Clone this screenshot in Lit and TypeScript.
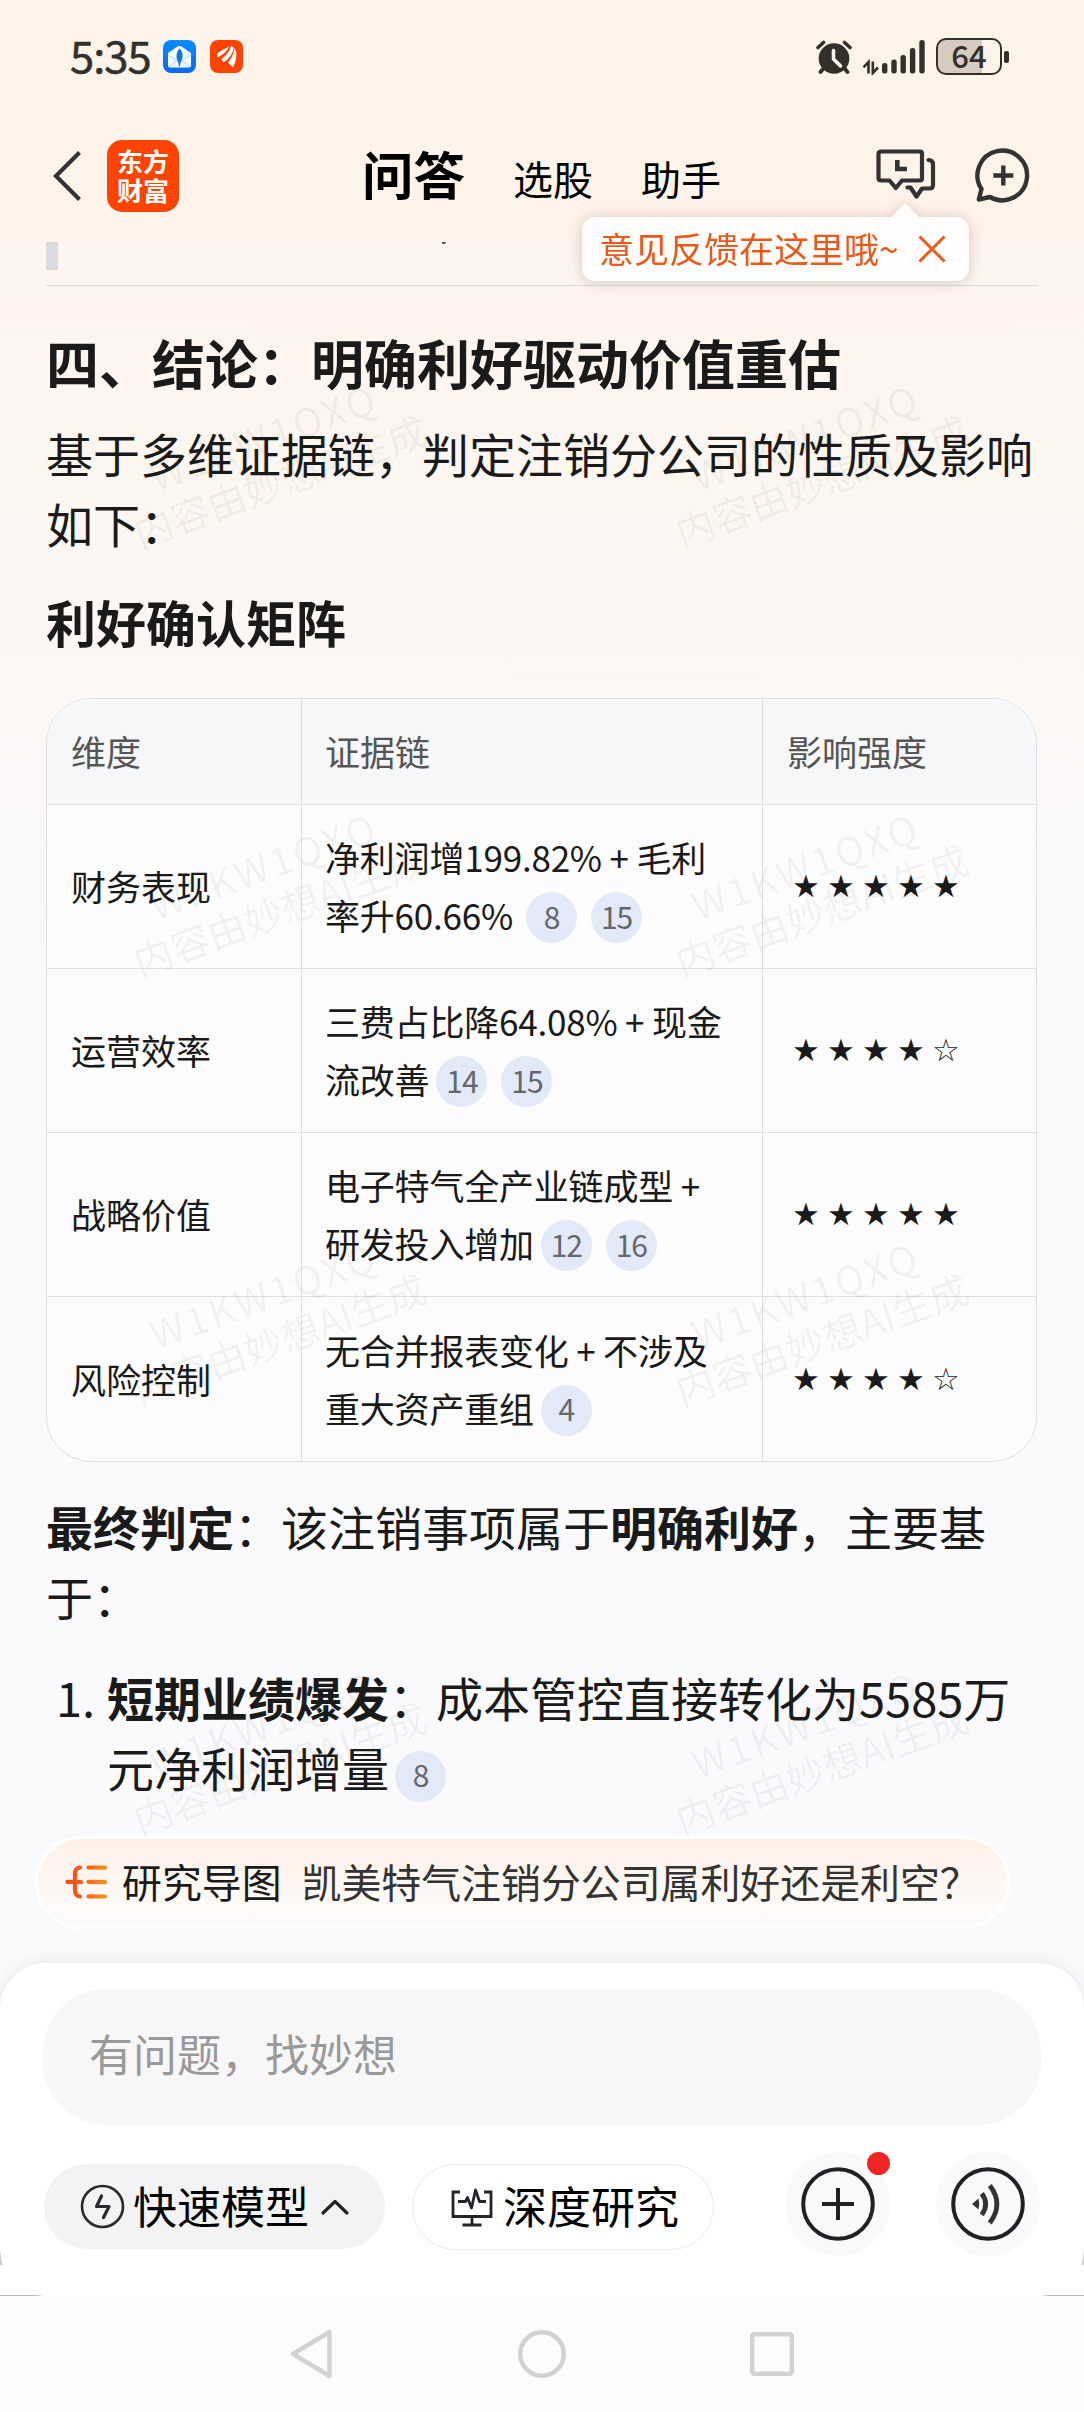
import { LitElement, html, css, svg } from "lit";
import { customElement, property } from "lit/decorators.js";

interface Row {
  dim: string;
  lines: string[];
  spaced?: boolean;
  refs: number[];
  stars: string;
}

const ROWS: Row[] = [
  { dim: "财务表现", lines: ["净利润增199.82% + 毛利", "率升60.66%"], spaced: true, refs: [8, 15], stars: "★★★★★" },
  { dim: "运营效率", lines: ["三费占比降64.08% + 现金", "流改善"], refs: [14, 15], stars: "★★★★☆" },
  { dim: "战略价值", lines: ["电子特气全产业链成型 +", "研发投入增加"], refs: [12, 16], stars: "★★★★★" },
  { dim: "风险控制", lines: ["无合并报表变化 + 不涉及", "重大资产重组"], refs: [4], stars: "★★★★☆" },
];

@customElement("status-bar")
class StatusBar extends LitElement {
  static styles = css`
    :host { display: flex; height: 113px; box-sizing: border-box; padding: 0 75px 0 70px; align-items: center; color: #33302c; }
    .time { font-size: 43.6px; line-height: 60px; letter-spacing: -1px; -webkit-text-stroke: 0.5px #33302c; margin: -5px 0 0; width: 93px; }
    .apps { display: flex; gap: 14px; }
    .right { margin-left: auto; display: flex; align-items: center; }
    svg { display: block; }
    .alarm { margin-right: 11px; }
    .signal { margin-right: 11px; }
    .battery { width: 66px; height: 37px; box-sizing: border-box; border: 2.5px solid #33302c; border-radius: 10px; background: linear-gradient(90deg, #d6cbc2 44px, transparent 44px); display: flex; align-items: center; justify-content: center; font-size: 31px; font-weight: 500; line-height: 32px; }
    .level { margin-top: -4px; }
    .nub { width: 5px; height: 12px; border-radius: 2px; background: #33302c; margin-left: 2px; }
  `;
  render() {
    return html`
      <div class="time">5:35</div>
      <div class="apps">
        <svg width="33" height="33" viewBox="0 0 33 33">
          <defs>
            <linearGradient id="b" x1="0" y1="0" x2="0" y2="1"><stop offset="0" stop-color="#0a8cff"/><stop offset="1" stop-color="#0c68f0"/></linearGradient>
          </defs>
          <rect width="33" height="33" rx="8" fill="url(#b)"/>
          <path d="M5 13 L14.5 6.6 Q16.5 5.6 18.5 6.6 L28 13 V25.5 Q28 27.500 26 27.500 H7 Q5 27.500 5 25.500 Z" fill="#f4faff"/>
          <path d="M5 15 L13.500 20 M28 15 L19.500 20 M6 27 L14 20.500 M27 27 L19 20.500" stroke="#bfe0fb" stroke-width="1.200" fill="none"/>
          <path d="M16.500 8.500 C20.500 12 20.500 18 17.500 23 L16.800 26.500 L15.800 26.500 L15.500 23 C12.500 18 13 12 16.500 8.500 Z" fill="#1077dd"/>
        </svg>
        <svg width="33" height="33" viewBox="0 0 33 33">
          <rect width="33" height="33" rx="8" fill="#ff4400"/>
          <path d="M7 13.500 Q13 9.500 19 6.500 Q16.500 13 7.500 17.500 Z" fill="#fff"/>
          <path d="M11.500 19 Q19 13.500 21 6 L23.800 7.500 Q22.500 16.500 13.500 22.500 Z" fill="#fff"/>
          <path d="M18 22.500 Q23.500 16 24.500 8 Q29 15 23 27.500 Z" fill="#fff"/>
        </svg>
      </div>
      <div class="right">
        <svg class="alarm" width="36" height="34" viewBox="0 0 36 34">
          <circle cx="18" cy="18.500" r="15.300" fill="#33302c"/>
          <path d="M2 7.500 L7.500 2.500 M34 7.500 L28.500 2.500" stroke="#33302c" stroke-width="3.600" stroke-linecap="round"/>
          <path d="M7 29 L4.500 32 M29 29 L31.500 32" stroke="#33302c" stroke-width="3.800" stroke-linecap="round"/>
          <path d="M17.500 10.500 V19 L24.500 26" stroke="#fef3e9" stroke-width="3.600" fill="none" stroke-linecap="round" stroke-linejoin="round"/>
        </svg>
        <svg class="signal" width="62" height="36" viewBox="863 38 62 36">
          <path d="M863.500 66.500 L868.500 61 V72.500 M872.800 60.500 V72 L878 66.500" stroke="#33302c" stroke-width="2.600" fill="none"/>
          ${[[884.7, 62], [894, 58.5], [903.2, 54], [912.6, 47], [922, 39]].map(
            ([x, y]) => svg`<rect x=${x - 2.700} y=${y} width="5.400" height=${72.500 - y} rx="2.500" fill="#33302c"/>`
          )}
        </svg>
        <div class="battery"><span class="level">64</span></div>
        <div class="nub"></div>
      </div>`;
  }
}

@customElement("top-nav")
class TopNav extends LitElement {
  static styles = css`
    :host { display: flex; height: 127px; box-sizing: border-box; padding: 0 53px 0 53px; position: relative; color: #000; }
    svg { display: block; flex: none; }
    .back { margin-top: 38px; }
    .logo { width: 72px; height: 72px; margin: 27px 0 0 25px; border-radius: 15px; background: #ff4400; color: #fff; font-weight: 700; font-size: 26px; line-height: 29px; display: flex; flex-direction: column; align-items: center; justify-content: center; box-sizing: border-box; padding-bottom: 3px; }
    .tabs { display: flex; align-items: baseline; margin-left: 183px; gap: 48px; height: 80px; margin-top: 2px; }
    .tab { font-size: 40px; line-height: 80px; }
    .on { font-size: 51.5px; font-weight: 700; line-height: 116px; }
    .icons { display: flex; gap: 39px; margin: 34px 0 0 auto; }
    .tip { position: absolute; left: 582px; top: 104px; width: 387px; height: 64px; box-sizing: border-box; padding: 0 23px 0 17px; display: flex; align-items: center; justify-content: space-between; background: #fffdfb; border-radius: 13px; color: #e8591a; font-size: 35px; line-height: 50px; filter: drop-shadow(0 1px 7px rgba(90, 60, 40, 0.24)); z-index: 3; }
    .tip::before { content: ""; position: absolute; left: 308px; top: -14px; border: 15px solid transparent; border-top: 0; border-bottom: 15px solid #fffdfb; }
    .label { margin-top: -2px; white-space: nowrap; }
  `;
  render() {
    return html`
      <svg class="back" width="29" height="50" viewBox="0 0 29 50"><path d="M26.500 1.500 L3 25 L26.500 48.500" fill="none" stroke="#333" stroke-width="4.200"/></svg>
      <div class="logo"><span>东方</span><span>财富</span></div>
      <div class="tabs"><span class="tab on">问答</span><span class="tab">选股</span><span class="tab">助手</span></div>
      <div class="icons">
        <svg width="61" height="54" viewBox="875 148 61 54" fill="none" stroke="#333" stroke-width="4.200" stroke-linejoin="round">
          <path d="M881 152.500 H920 Q922 152.500 922 154.500 V179.500 Q922 181.500 920 181.500 H902 L895.800 189 L889.500 181.500 H881 Q878.500 181.500 878.500 179 V155 Q878.500 152.500 881 152.500 Z"/>
          <path d="M928.500 161 Q933 161 933 165.500 V186 Q933 189.500 929.500 189.500 H922 L916.500 197.500 L910.500 188.500 H907.500" stroke-linecap="round"/>
          <path d="M897.300 161 V170 H907" stroke-width="4.600" stroke-linejoin="miter"/>
        </svg>
        <svg width="56" height="56" viewBox="975 148 56 56" fill="none" stroke="#333" stroke-width="4.400" stroke-linejoin="round">
          <path d="M978.800 200.500 L981.500 190 A24.800 24.800 0 1 1 990 198 Z"/>
          <path d="M1003.300 166.500 V186.500 M993.300 176.500 H1013.300"/>
        </svg>
      </div>
      <div class="tip">
        <span class="label">意见反馈在这里哦~</span>
        <svg width="28" height="28" viewBox="0 0 28 28"><path d="M1.500 1.500 L26.500 26.500 M26.500 1.500 L1.500 26.500" stroke="#ee5a1c" stroke-width="3" fill="none"/></svg>
      </div>`;
  }
}

@customElement("ref-badge")
class RefBadge extends LitElement {
  @property({ type: Number }) n = 0;
  static styles = css`
    :host { display: inline-flex; flex: none; width: 51px; height: 51px; border-radius: 50%; background: #e2e9f7; color: #64676d; font-size: 30px; line-height: 51px; letter-spacing: -1px; align-items: center; justify-content: center; margin: 0 8px 0 6px; }
    .n { margin-top: -3px; }
  `;
  render() {
    return html`<span class="n">${this.n}</span>`;
  }
}

@customElement("evidence-table")
class EvidenceTable extends LitElement {
  static styles = css`
    :host { display: block; }
    .table { width: 991px; height: 764px; box-sizing: border-box; border: 1px solid #dfe0e2; border-radius: 45px; overflow: hidden; display: grid; grid-template-columns: 255px 461px 1fr; grid-template-rows: 106px repeat(4, 1fr); background: #fcfcfd; font-size: 35px; line-height: 58px; color: #1a1a1a; }
    .cell { box-sizing: border-box; border-right: 1px solid #e0e0e2; border-bottom: 1px solid #e0e0e2; padding: 0 0 0 24px; display: flex; align-items: center; white-space: nowrap; }
    .last { border-right: 0; }
    .foot { border-bottom: 0; }
    .head { background: #f6f7f9; color: #555; }
    .wide { padding-left: 23px; }
    .body { display: flex; flex-direction: column; }
    .line { display: flex; height: 58px; align-items: center; letter-spacing: -0.200px; white-space: pre; }
    .refs { display: flex; margin: 5px 0 0 1px; }
    .spaced { margin-left: 7px; }
    .stars { font-family: "DejaVu Sans", sans-serif; font-size: 31px; letter-spacing: 7.200px; padding: 0 0 0 5px; }
  `;
  render() {
    return html`<div class="table">
      <div class="cell head">维度</div>
      <div class="cell head wide">证据链</div>
      <div class="cell head last">影响强度</div>
      ${ROWS.map((r, i) => {
        const foot = i === ROWS.length - 1 ? "foot" : "";
        return html`
          <div class="cell ${foot}">${r.dim}</div>
          <div class="cell wide ${foot}"><div class="body">
            <div class="line">${r.lines[0]}</div>
            <div class="line"><span>${r.lines[1]}</span><span class="refs ${r.spaced ? "spaced" : ""}">${r.refs.map((n) => html`<ref-badge .n=${n}></ref-badge>`)}</span></div>
          </div></div>
          <div class="cell last ${foot}"><span class="stars">${r.stars}</span></div>`;
      })}
    </div>`;
  }
}

@customElement("answer-content")
class AnswerContent extends LitElement {
  static styles = css`
    :host { display: block; height: 1723px; box-sizing: border-box; padding: 2px 46px 0; position: relative; overflow: hidden; font-size: 47px; line-height: 70.300px; color: #1a1a1a; white-space: nowrap; }
    .prev { display: flex; align-items: flex-start; gap: 384px; }
    .quote { height: 28px; width: 12px; background: #d9dde1; }
    .stroke { width: 4px; height: 2px; background: #555; border-radius: 0 0 2px 0; }
    .rule { height: 1px; background: #dcdcde; margin: 15px 0 41px; }
    h2, h3, p { margin: 0; }
    h2 { font-size: 53px; line-height: 70px; font-weight: 700; }
    h3 { font-size: 50px; line-height: 70px; font-weight: 700; margin: 27px 0 42px; }
    .lead { margin-top: 21px; }
    .verdict { margin-top: 29px; }
    .list { display: flex; margin-top: 31px; }
    .num { width: 51px; margin-left: 10px; flex: none; }
    .tail { display: flex; align-items: center; height: 70.300px; }
    .ref { display: flex; margin-top: 17px; }
    .marks { position: absolute; left: 0; top: 3px; width: 1084px; display: grid; grid-template-columns: 542px 542px; grid-auto-rows: 429px; pointer-events: none; font-size: 39px; line-height: 47px; color: rgba(60, 60, 60, 0.062); text-align: center; }
    .mark { display: flex; flex-direction: column; align-items: center; justify-content: center; transform: rotate(-20deg); }
    .code { letter-spacing: 3px; }
    .chip { display: flex; align-items: center; width: 975px; height: 93px; box-sizing: border-box; border: 3px solid #fff; border-radius: 47px; background: linear-gradient(180deg, #fff1e7, #fef5ef 40%, #fdfaf8 80%, #fcfbfa); margin: 33px 0 0 -11px; padding-left: 27px; font-size: 39.900px; line-height: 60px; }
    .chip svg { display: block; margin-right: 14px; }
    .name { margin: -3px 20px 0 0; }
    .q { color: #333; margin-top: -3px; }
  `;
  render() {
    return html`
      <div class="prev"><div class="quote"></div><div class="stroke"></div></div>
      <div class="rule"></div>
      <h2>四、结论：明确利好驱动价值重估</h2>
      <p class="lead">基于多维证据链，判定注销分公司的性质及影响<br />如下：</p>
      <h3>利好确认矩阵</h3>
      <evidence-table></evidence-table>
      <p class="verdict"><b>最终判定</b>：该注销事项属于<b>明确利好</b>，主要基<br />于：</p>
      <div class="list">
        <span class="num">1.</span>
        <div>
          <div><b>短期业绩爆发</b>：成本管控直接转化为5585万</div>
          <div class="tail"><span>元净利润增量</span><span class="ref"><ref-badge .n=${8}></ref-badge></span></div>
        </div>
      </div>
      <div class="chip">
        <svg width="43" height="34" viewBox="0 0 43 34">
          <defs>
            <linearGradient id="o" gradientUnits="userSpaceOnUse" x1="0" y1="17" x2="43" y2="20"><stop offset="0" stop-color="#ea4f1c"/><stop offset="0.450" stop-color="#fb5e12"/><stop offset="1" stop-color="#f59a1c"/></linearGradient>
          </defs>
          <g fill="none" stroke="url(#o)" stroke-width="4.200" stroke-linecap="round">
            <path d="M15 2.500 Q10 3 10 9 V25 Q10 31 15 31.500"/>
            <path d="M2.500 16.900 L16 17.100"/>
            <path d="M23.500 2.500 L40 2.600 M23.500 16.900 L40 17.100 M23.500 31.400 L40 31.500"/>
          </g>
        </svg>
        <span class="name">研究导图</span><span class="q">凯美特气注销分公司属利好还是利空？</span>
      </div>
      <div class="marks">${Array.from({ length: 8 }, () => html`<div class="mark"><div class="code">W1KW1QXQ</div><div>内容由妙想AI生成</div></div>`)}</div>`;
  }
}

@customElement("input-dock")
class InputDock extends LitElement {
  static styles = css`
    :host { display: block; height: 333px; position: relative; box-sizing: border-box; padding: 26px 43px 0; background: #fff; border-radius: 46px 46px 0 0; box-shadow: 0 0 16px rgba(60, 60, 70, 0.110); }
    :host::after { content: ""; position: absolute; left: 0; right: 0; bottom: 0; height: 1px; background: linear-gradient(90deg, #bdbdbd 36px, transparent 43px, transparent 1041px, #bdbdbd 1048px); }
    :host::before { content: ""; position: absolute; left: 0; right: 0; bottom: 31px; height: 15px; background: #d0d0d2; clip-path: polygon(0 0, 2.500px 14.900px, 1081.500px 14.900px, 1084px 0, 1084px 15px, 0 15px); }
    .field { height: 136px; border-radius: 63px; background: #f7f7f7; color: #999; font-size: 44px; line-height: 128px; padding-left: 46px; }
    .row { display: flex; align-items: center; margin-top: 27px; height: 104px; }
    .pill { display: flex; align-items: center; box-sizing: border-box; height: 86px; border-radius: 43px; font-size: 44px; line-height: 60px; color: #000; margin-top: 5px; }
    .pill span { margin-top: -4px; }
    .model { width: 341px; height: 85px; background: #f3f3f3; padding-left: 36px; margin-left: 1px; }
    .model svg + span { margin-left: 8px; margin-right: 11px; }
    .deep { width: 302px; border: 1px solid #ebebeb; background: #fff; padding-left: 38px; margin-left: 27px; }
    .deep span { margin-left: 10px; }
    svg { display: block; flex: none; }
    .round { width: 104px; height: 104px; border-radius: 50%; background: #f8faf9; position: relative; display: flex; align-items: center; justify-content: center; }
    .add { margin-left: 72px; }
    .voice { margin-left: 46px; }
    .dot { position: absolute; right: 0; top: 0; width: 23px; height: 23px; border-radius: 50%; background: #f22525; }
  `;
  render() {
    return html`
      <div class="field">有问题，找妙想</div>
      <div class="row">
        <div class="pill model">
          <svg width="45" height="45" viewBox="0 0 45 45" fill="none" stroke="#2a2a2e" stroke-width="2.600" stroke-linecap="round" stroke-linejoin="round"><circle cx="22.500" cy="22.500" r="20.500"/><path d="M21.500 12 L16.500 22.500 H29 L23.500 33.500" stroke-width="3.200"/></svg>
          <span>快速模型</span>
          <svg width="30" height="18" viewBox="0 0 30 18"><path d="M3 15 L15 3.500 L27 15" fill="none" stroke="#222" stroke-width="3.200" stroke-linecap="round" stroke-linejoin="round"/></svg>
        </div>
        <div class="pill deep">
          <svg width="42" height="40" viewBox="0 0 42 40" fill="none" stroke="#222428" stroke-width="2.800" stroke-linejoin="round"><path d="M9 5 H2 V29.500 H40 V5 H33" stroke-linejoin="miter"/><path d="M21 29.500 V37.500 M11.500 38 H30.500"/><path d="M7 14.500 H14.500 L16.500 10.500 L20.500 21 L24.500 3 L28.500 14.500 H35"/></svg>
          <span>深度研究</span>
        </div>
        <div class="round add">
          <svg width="76" height="76" viewBox="0 0 76 76" fill="none" stroke="#1f2125" stroke-width="4"><circle cx="38" cy="38" r="34.800"/><path d="M38 22 V54 M22 38 H54"/></svg>
          <i class="dot"></i>
        </div>
        <div class="round voice">
          <svg width="76" height="76" viewBox="0 0 76 76" fill="none" stroke="#1f2125" stroke-width="4"><circle cx="38" cy="38" r="34.800"/><path d="M22 38 L28.500 32.500 Q30 38 28.500 43.500 Z" fill="#333" stroke="none"/><path d="M31.800 27.500 Q39.500 38 31.800 48.800" stroke="#333" stroke-width="4.800"/><path d="M39.800 19.500 Q54 38 39.800 57" stroke="#333" stroke-width="4.800"/></svg>
        </div>
      </div>`;
  }
}

@customElement("system-nav")
class SystemNav extends LitElement {
  static styles = css`
    :host { display: flex; height: 116px; align-items: center; justify-content: center; gap: 183px; background: #fcfcfc; position: relative; }
    svg { display: block; }
  `;
  render() {
    return html`
      <svg width="44" height="50" viewBox="0 0 44 50" fill="none" stroke="#d2d2d2" stroke-width="4.400" stroke-linejoin="round"><path d="M3 25 L39.500 3 V47 Z"/></svg>
      <svg width="50" height="50" viewBox="0 0 50 50" fill="none" stroke="#d2d2d2" stroke-width="4.400"><circle cx="25" cy="25" r="21.800"/></svg>
      <svg width="44" height="46" viewBox="0 0 44 46" fill="none" stroke="#d2d2d2" stroke-width="4.400"><rect x="2.200" y="3.200" width="39.600" height="39.600" rx="2"/></svg>`;
  }
}

@customElement("app-root")
class AppRoot extends LitElement {
  static styles = css`
    :host { display: block; width: 1084px; height: 2412px; overflow: hidden; font-family: "Noto Sans CJK SC", sans-serif; background: linear-gradient(180deg, #fef3e9 0, #fef3e9 240px, #fdf4ef 240px, #fef4ed 310px, #fcf6f0 450px, #fcf7f4 620px, #fbf9f8 820px, #fafafc 1000px, #fafafd 100%); }
  `;
  render() {
    return html`
      <status-bar></status-bar>
      <top-nav></top-nav>
      <answer-content></answer-content>
      <input-dock></input-dock>
      <system-nav></system-nav>`;
  }
}
